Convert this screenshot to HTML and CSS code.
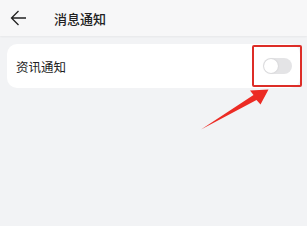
FILE: index.html
```html
<!DOCTYPE html>
<html lang="zh-CN">
<head>
<meta charset="UTF-8">
<meta name="viewport" content="width=device-width, initial-scale=1.0">
<title>消息通知</title>
<link rel="stylesheet" href="styles.css">
</head>
<body>
<div class="page">
    <div class="top-bar">
        <svg class="back" width="17" height="16" viewBox="0 0 17 16">
            <path d="M16 8 H1.5 M8.5 1 L1.5 8 L8.5 15" fill="none" stroke="#222" stroke-width="1.3"/>
        </svg>
        <div class="title">消息通知</div>
    </div>

    <div class="card">
        <span class="label">资讯通知</span>
        <div class="switch"><div class="knob"></div></div>
    </div>

    <!-- annotation -->
    <div class="mark-box"></div>
    <svg class="mark-arrow" width="307" height="226" viewBox="0 0 307 226">
        <polygon points="201,129.5 253.5,95 250,90.5 268.5,89.5 260.5,104.5 256.5,100" fill="#ec2b24"/>
    </svg>
</div>
</body>
</html>
```

FILE: styles.css
```css
body {
    margin: 0;
    font-family: 'Noto Sans CJK SC', 'Noto Sans', sans-serif;
    background-color: #f2f3f5;
    color: #222;
}

.page {
    position: relative;
    width: 307px;
    height: 226px;
    overflow: hidden;
}

.top-bar {
    display: flex;
    align-items: center;
    height: 36px;
    padding-left: 10px;
    background-color: #f7f7f8;
    box-shadow: 0 1px 2px rgba(0,0,0,0.05);
}

.back {
    margin-right: 27px;
}

.title {
    font-size: 13px;
    font-weight: 500;
}

.card {
    display: flex;
    justify-content: space-between;
    align-items: center;
    height: 44px;
    margin: 8px 7px 0 7px;
    padding: 0 8px 0 9px;
    background: white;
    border-radius: 10px;
}

.label {
    font-size: 12.5px;
}

.switch {
    display: flex;
    align-items: center;
    width: 29px;
    height: 16px;
    padding: 0 1px;
    box-sizing: border-box;
    background-color: #e4e4e6;
    border-radius: 8px;
}

.knob {
    width: 14px;
    height: 14px;
    background: white;
    border-radius: 50%;
    box-shadow: 0 0 2px rgba(0,0,0,0.15);
}

.mark-box {
    position: absolute;
    left: 252px;
    top: 45px;
    width: 50px;
    height: 42px;
    box-sizing: border-box;
    border: 2.5px solid #dd2d27;
    border-radius: 2px;
}

.mark-arrow {
    position: absolute;
    left: 0;
    top: 0;
}
```
